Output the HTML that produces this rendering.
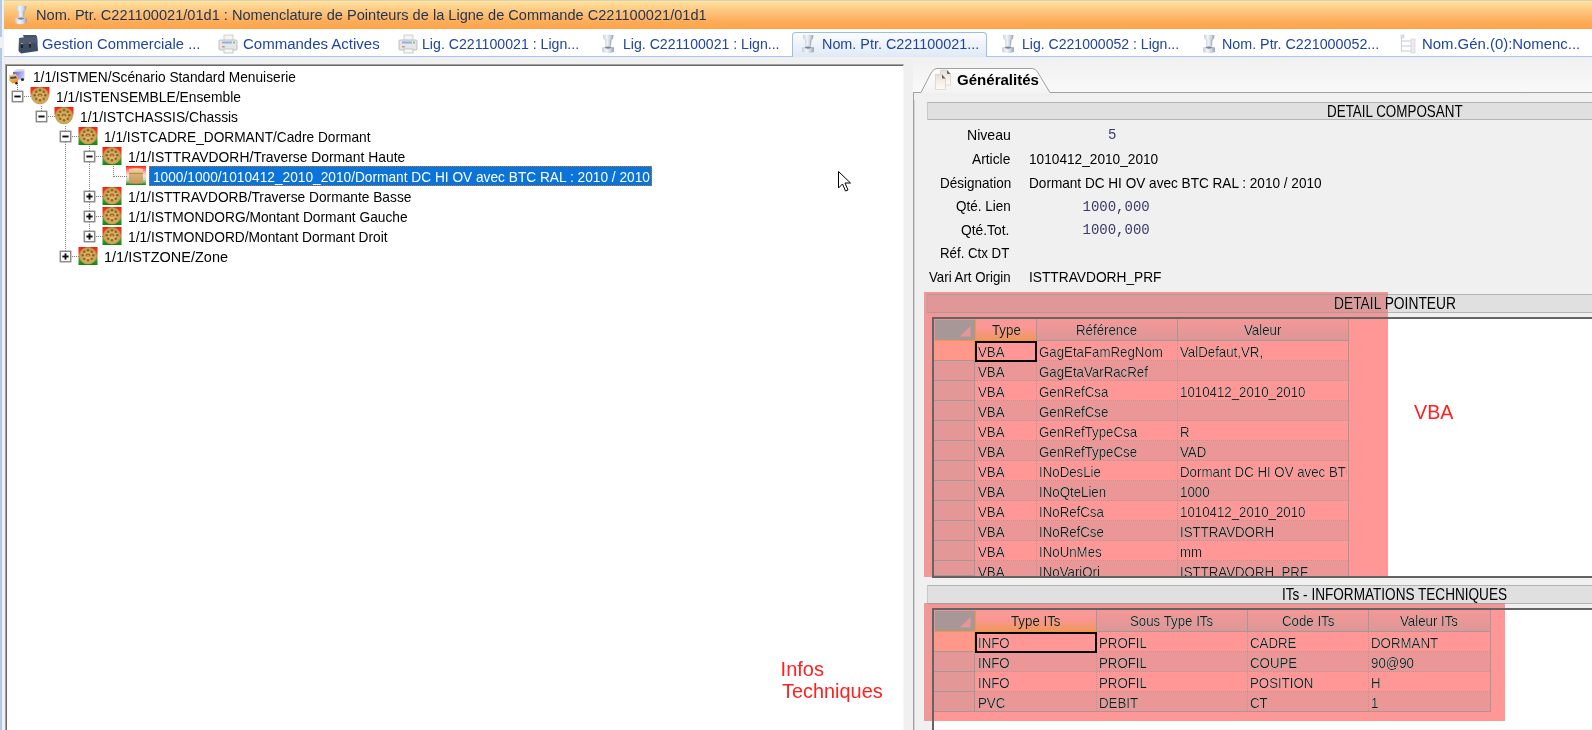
<!DOCTYPE html><html><head><meta charset="utf-8"><style>
html,body{margin:0;padding:0;}
body{width:1592px;height:730px;overflow:hidden;position:relative;background:#f0f0f0;font-family:"Liberation Sans", sans-serif;}
.t{position:absolute;white-space:nowrap;}
.b{position:absolute;box-sizing:border-box;}
svg{position:absolute;overflow:visible;}
</style></head><body>
<div class="b" style="left:0px;top:0px;width:4px;height:730px;background:#eef0f3;"></div>
<div class="b" style="left:0px;top:0px;width:2px;height:37px;background:#b7c9e2;"></div>
<div class="b" style="left:0px;top:48px;width:2px;height:682px;background:#b7c9e2;"></div>
<div class="b" style="left:4px;top:0px;width:1588px;height:1px;background:#d9d2b9;"></div>
<div class="b" style="left:4px;top:1px;width:1588px;height:28px;background:linear-gradient(#ffe49f 0%,#fdc47c 38%,#fdac58 75%,#ffa347 100%);"></div>
<div class="b" style="left:4px;top:29px;width:1588px;height:27px;background:#ffffff;"></div>
<div class="b" style="left:4px;top:56px;width:1588px;height:1px;background:#a9c6f0;"></div>
<div class="b" style="left:792px;top:32px;width:195px;height:25px;border:1px solid #9dbcea;border-bottom:none;border-radius:4px 4px 0 0;background:linear-gradient(#fbfcfe,#dfe9f6);"></div>
<div class="b" style="left:5px;top:64px;width:899px;height:666px;background:#fff;border-top:2px solid #a0a0a0;border-left:2px solid #a0a0a0;border-right:1px solid #f7f7f7;"></div>
<div class="b" style="left:7px;top:65px;width:896px;height:1px;background:#696969;"></div>
<div class="b" style="left:6px;top:65px;width:1px;height:665px;background:#696969;"></div>
<div class="b" style="left:913px;top:57px;width:679px;height:35px;background:linear-gradient(#f0f0f0,#f9f9f9);"></div>
<div class="b" style="left:913px;top:92px;width:679px;height:638px;background:#f0f0f0;border-left:1px solid #a0a0a0;border-top:1px solid #a8a8a8;"></div>
<div class="b" style="left:914px;top:93px;width:1px;height:637px;background:#d4d4d4;"></div>
<svg style="left:14px;top:5px" width="14" height="20" viewBox="0 0 14 20">
<defs><linearGradient id="bg14" x1="0" x2="1"><stop offset="0" stop-color="#c4ccd8"/><stop offset=".35" stop-color="#f2f5fa"/><stop offset=".7" stop-color="#cdd5e0"/><stop offset="1" stop-color="#8e9cb0"/></linearGradient></defs>
<path d="M2 1 Q7 -0.2 12.5 1.2 L12 4.5 Q11 6 10 6 L4 6 Q2.5 5 2.3 4.5 Z" fill="url(#bg14)"/>
<path d="M4 5.5 L10.5 5.5 L10 12 L4.5 12 Z" fill="url(#bg14)"/>
<path d="M1 13.5 Q7 11 13 13.5 L12.8 18 Q7 20.5 1.2 18 Z" fill="url(#bg14)"/>
<ellipse cx="7" cy="13.6" rx="3.2" ry="1.1" fill="#7a8698"/>
</svg>
<div class="t" style="left:36px;top:7.28px;font-size:15.5px;line-height:15.5px;color:#1d3557;transform:scaleX(0.9407);transform-origin:0 0;">Nom. Ptr. C221100021/01d1 : Nomenclature de Pointeurs de la Ligne de Commande C221100021/01d1</div>
<div class="t" style="left:42px;top:36.08px;font-size:15.5px;line-height:15.5px;color:#1f45a0;transform:scaleX(0.9532);transform-origin:0 0;">Gestion Commerciale ...</div>
<div class="t" style="left:242.6px;top:36.08px;font-size:15.5px;line-height:15.5px;color:#1f45a0;transform:scaleX(0.9675);transform-origin:0 0;">Commandes Actives</div>
<div class="t" style="left:422.2px;top:36.08px;font-size:15.5px;line-height:15.5px;color:#1f45a0;transform:scaleX(0.9131);transform-origin:0 0;">Lig. C221100021 : Lign...</div>
<div class="t" style="left:622.6px;top:36.08px;font-size:15.5px;line-height:15.5px;color:#1f45a0;transform:scaleX(0.9096);transform-origin:0 0;">Lig. C221100021 : Lign...</div>
<div class="t" style="left:822.2px;top:36.08px;font-size:15.5px;line-height:15.5px;color:#1f45a0;transform:scaleX(0.9273);transform-origin:0 0;">Nom. Ptr. C221100021...</div>
<div class="t" style="left:1022.2px;top:36.08px;font-size:15.5px;line-height:15.5px;color:#1f45a0;transform:scaleX(0.9070);transform-origin:0 0;">Lig. C221000052 : Lign...</div>
<div class="t" style="left:1222.2px;top:36.08px;font-size:15.5px;line-height:15.5px;color:#1f45a0;transform:scaleX(0.9217);transform-origin:0 0;">Nom. Ptr. C221000052...</div>
<div class="t" style="left:1422px;top:36.08px;font-size:15.5px;line-height:15.5px;color:#1f45a0;transform:scaleX(0.9619);transform-origin:0 0;">Nom.Gén.(0):Nomenc...</div>
<svg style="left:18px;top:34px" width="21" height="20" viewBox="0 0 21 20">
<path d="M5 1 L18 1 L19 3 L6 4 Z" fill="#4a525e"/>
<path d="M1 4 L19 2.5 L20 17 L3 19.5 L0.5 17 Z" fill="#3d4d63"/>
<path d="M1 4 L19 2.5 L19.5 9 L1 10 Z" fill="#4c5c74"/>
<rect x="3" y="9" width="2" height="5" fill="#1a2030"/><rect x="11" y="8.5" width="2" height="5" fill="#1a2030"/>
<rect x="3" y="9" width="2" height="1.2" fill="#c8a030"/><rect x="11" y="8.5" width="2" height="1.2" fill="#c8a030"/>
</svg>
<svg style="left:218px;top:34px" width="20" height="20" viewBox="0 0 20 20">
<rect x="6" y="1" width="9" height="6" fill="#f4f4f4" stroke="#c8c8c8" stroke-width=".8"/>
<rect x="1" y="6" width="18" height="10" rx="1" fill="#e6e6e6" stroke="#b4b4b4" stroke-width=".8"/>
<rect x="4" y="7.5" width="10" height="2" fill="#8fb0e0"/><rect x="15" y="7.5" width="2" height="2" fill="#80c880"/>
<rect x="4" y="12" width="2" height="1.5" fill="#e08888"/><rect x="6" y="12" width="1" height="1.5" fill="#88c888"/>
<rect x="6" y="15" width="9" height="4" fill="#f8f8f8" stroke="#bcbcbc" stroke-width=".8"/>
</svg>
<svg style="left:398px;top:34px" width="20" height="20" viewBox="0 0 20 20">
<rect x="6" y="1" width="9" height="6" fill="#f4f4f4" stroke="#c8c8c8" stroke-width=".8"/>
<rect x="1" y="6" width="18" height="10" rx="1" fill="#e6e6e6" stroke="#b4b4b4" stroke-width=".8"/>
<rect x="4" y="7.5" width="10" height="2" fill="#8fb0e0"/><rect x="15" y="7.5" width="2" height="2" fill="#80c880"/>
<rect x="4" y="12" width="2" height="1.5" fill="#e08888"/><rect x="6" y="12" width="1" height="1.5" fill="#88c888"/>
<rect x="6" y="15" width="9" height="4" fill="#f8f8f8" stroke="#bcbcbc" stroke-width=".8"/>
</svg>
<svg style="left:601px;top:34px" width="14" height="20" viewBox="0 0 14 20">
<defs><linearGradient id="bg601" x1="0" x2="1"><stop offset="0" stop-color="#c4ccd8"/><stop offset=".35" stop-color="#f2f5fa"/><stop offset=".7" stop-color="#cdd5e0"/><stop offset="1" stop-color="#8e9cb0"/></linearGradient></defs>
<path d="M2 1 Q7 -0.2 12.5 1.2 L12 4.5 Q11 6 10 6 L4 6 Q2.5 5 2.3 4.5 Z" fill="url(#bg601)"/>
<path d="M4 5.5 L10.5 5.5 L10 12 L4.5 12 Z" fill="url(#bg601)"/>
<path d="M1 13.5 Q7 11 13 13.5 L12.8 18 Q7 20.5 1.2 18 Z" fill="url(#bg601)"/>
<ellipse cx="7" cy="13.6" rx="3.2" ry="1.1" fill="#7a8698"/>
</svg>
<svg style="left:801px;top:34px" width="14" height="20" viewBox="0 0 14 20">
<defs><linearGradient id="bg801" x1="0" x2="1"><stop offset="0" stop-color="#c4ccd8"/><stop offset=".35" stop-color="#f2f5fa"/><stop offset=".7" stop-color="#cdd5e0"/><stop offset="1" stop-color="#8e9cb0"/></linearGradient></defs>
<path d="M2 1 Q7 -0.2 12.5 1.2 L12 4.5 Q11 6 10 6 L4 6 Q2.5 5 2.3 4.5 Z" fill="url(#bg801)"/>
<path d="M4 5.5 L10.5 5.5 L10 12 L4.5 12 Z" fill="url(#bg801)"/>
<path d="M1 13.5 Q7 11 13 13.5 L12.8 18 Q7 20.5 1.2 18 Z" fill="url(#bg801)"/>
<ellipse cx="7" cy="13.6" rx="3.2" ry="1.1" fill="#7a8698"/>
</svg>
<svg style="left:1001px;top:34px" width="14" height="20" viewBox="0 0 14 20">
<defs><linearGradient id="bg1001" x1="0" x2="1"><stop offset="0" stop-color="#c4ccd8"/><stop offset=".35" stop-color="#f2f5fa"/><stop offset=".7" stop-color="#cdd5e0"/><stop offset="1" stop-color="#8e9cb0"/></linearGradient></defs>
<path d="M2 1 Q7 -0.2 12.5 1.2 L12 4.5 Q11 6 10 6 L4 6 Q2.5 5 2.3 4.5 Z" fill="url(#bg1001)"/>
<path d="M4 5.5 L10.5 5.5 L10 12 L4.5 12 Z" fill="url(#bg1001)"/>
<path d="M1 13.5 Q7 11 13 13.5 L12.8 18 Q7 20.5 1.2 18 Z" fill="url(#bg1001)"/>
<ellipse cx="7" cy="13.6" rx="3.2" ry="1.1" fill="#7a8698"/>
</svg>
<svg style="left:1202px;top:34px" width="14" height="20" viewBox="0 0 14 20">
<defs><linearGradient id="bg1202" x1="0" x2="1"><stop offset="0" stop-color="#c4ccd8"/><stop offset=".35" stop-color="#f2f5fa"/><stop offset=".7" stop-color="#cdd5e0"/><stop offset="1" stop-color="#8e9cb0"/></linearGradient></defs>
<path d="M2 1 Q7 -0.2 12.5 1.2 L12 4.5 Q11 6 10 6 L4 6 Q2.5 5 2.3 4.5 Z" fill="url(#bg1202)"/>
<path d="M4 5.5 L10.5 5.5 L10 12 L4.5 12 Z" fill="url(#bg1202)"/>
<path d="M1 13.5 Q7 11 13 13.5 L12.8 18 Q7 20.5 1.2 18 Z" fill="url(#bg1202)"/>
<ellipse cx="7" cy="13.6" rx="3.2" ry="1.1" fill="#7a8698"/>
</svg>
<svg style="left:1398px;top:34px" width="18" height="20" viewBox="0 0 18 20">
<rect x="3" y="1" width="3" height="3" fill="#dde6f0" stroke="#c0c8d0" stroke-width=".6"/>
<rect x="3" y="4" width="1" height="14" fill="#c8d0dc"/>
<rect x="4" y="6" width="9" height="2" fill="#e2e4ea"/><rect x="4" y="11" width="9" height="2" fill="#e2e4ea"/><rect x="4" y="16" width="9" height="2" fill="#e2e4ea"/>
<rect x="13" y="5" width="4" height="14" fill="#eaecf2" stroke="#c8ccd4" stroke-width=".6"/>
</svg>
<svg style="left:0;top:0" width="1592" height="730"><g stroke="#808080" stroke-width="1" stroke-dasharray="1 1" shape-rendering="crispEdges"><line x1="17.5" y1="85" x2="17.5" y2="96.5"/><line x1="41.5" y1="106" x2="41.5" y2="116.5"/><line x1="65.5" y1="126" x2="65.5" y2="256.5"/><line x1="89.5" y1="146" x2="89.5" y2="236.5"/><line x1="113.5" y1="166" x2="113.5" y2="176.5"/><line x1="17.5" y1="96.5" x2="31" y2="96.5"/><line x1="41.5" y1="116.5" x2="55" y2="116.5"/><line x1="65.5" y1="136.5" x2="79" y2="136.5"/><line x1="89.5" y1="156.5" x2="103" y2="156.5"/><line x1="113.5" y1="176.5" x2="127" y2="176.5"/><line x1="89.5" y1="196.5" x2="103" y2="196.5"/><line x1="89.5" y1="216.5" x2="103" y2="216.5"/><line x1="89.5" y1="236.5" x2="103" y2="236.5"/><line x1="65.5" y1="256.5" x2="79" y2="256.5"/></g></svg>
<svg style="left:11px;top:90px" width="13" height="13" viewBox="0 0 13 13"><rect x="1.3" y="1.3" width="10.4" height="10.4" fill="#fff" stroke="#8a8a8a" stroke-width="1.5"/><g stroke="#111" stroke-width="1.9"><line x1="3.4" y1="6.5" x2="9.6" y2="6.5"/></g></svg>
<svg style="left:35px;top:110px" width="13" height="13" viewBox="0 0 13 13"><rect x="1.3" y="1.3" width="10.4" height="10.4" fill="#fff" stroke="#8a8a8a" stroke-width="1.5"/><g stroke="#111" stroke-width="1.9"><line x1="3.4" y1="6.5" x2="9.6" y2="6.5"/></g></svg>
<svg style="left:59px;top:130px" width="13" height="13" viewBox="0 0 13 13"><rect x="1.3" y="1.3" width="10.4" height="10.4" fill="#fff" stroke="#8a8a8a" stroke-width="1.5"/><g stroke="#111" stroke-width="1.9"><line x1="3.4" y1="6.5" x2="9.6" y2="6.5"/></g></svg>
<svg style="left:83px;top:150px" width="13" height="13" viewBox="0 0 13 13"><rect x="1.3" y="1.3" width="10.4" height="10.4" fill="#fff" stroke="#8a8a8a" stroke-width="1.5"/><g stroke="#111" stroke-width="1.9"><line x1="3.4" y1="6.5" x2="9.6" y2="6.5"/></g></svg>
<svg style="left:83px;top:190px" width="13" height="13" viewBox="0 0 13 13"><rect x="1.3" y="1.3" width="10.4" height="10.4" fill="#fff" stroke="#8a8a8a" stroke-width="1.5"/><g stroke="#111" stroke-width="1.9"><line x1="3.4" y1="6.5" x2="9.6" y2="6.5"/><line x1="6.5" y1="3.4" x2="6.5" y2="9.6"/></g></svg>
<svg style="left:83px;top:210px" width="13" height="13" viewBox="0 0 13 13"><rect x="1.3" y="1.3" width="10.4" height="10.4" fill="#fff" stroke="#8a8a8a" stroke-width="1.5"/><g stroke="#111" stroke-width="1.9"><line x1="3.4" y1="6.5" x2="9.6" y2="6.5"/><line x1="6.5" y1="3.4" x2="6.5" y2="9.6"/></g></svg>
<svg style="left:83px;top:230px" width="13" height="13" viewBox="0 0 13 13"><rect x="1.3" y="1.3" width="10.4" height="10.4" fill="#fff" stroke="#8a8a8a" stroke-width="1.5"/><g stroke="#111" stroke-width="1.9"><line x1="3.4" y1="6.5" x2="9.6" y2="6.5"/><line x1="6.5" y1="3.4" x2="6.5" y2="9.6"/></g></svg>
<svg style="left:59px;top:250px" width="13" height="13" viewBox="0 0 13 13"><rect x="1.3" y="1.3" width="10.4" height="10.4" fill="#fff" stroke="#8a8a8a" stroke-width="1.5"/><g stroke="#111" stroke-width="1.9"><line x1="3.4" y1="6.5" x2="9.6" y2="6.5"/><line x1="6.5" y1="3.4" x2="6.5" y2="9.6"/></g></svg>
<svg style="left:30px;top:86px" width="20" height="19" viewBox="0 0 20 19">
<defs><linearGradient id="dg1" x1="0" y1="0" x2="0" y2="1"><stop offset="0" stop-color="#ff1a10"/><stop offset=".35" stop-color="#ff3a28"/><stop offset=".65" stop-color="#ffffff" stop-opacity="0"/><stop offset="1" stop-color="#ffffff" stop-opacity="0"/></linearGradient>
<radialGradient id="dr1" cx=".5" cy=".55" r=".6"><stop offset="0" stop-color="#e2c070"/><stop offset=".75" stop-color="#c8a050"/><stop offset="1" stop-color="#a88038"/></radialGradient></defs>
<rect x="0.5" y="1" width="19" height="18" fill="url(#dg1)"/>
<ellipse cx="10" cy="9.7" rx="8.9" ry="8.6" fill="url(#dr1)"/>
<g fill="#8a5a20" opacity=".9"><circle cx="10.00" cy="4.30" r="1.25"/><circle cx="13.75" cy="5.76" r="1.25"/><circle cx="15.30" cy="9.30" r="1.25"/><circle cx="13.75" cy="12.84" r="1.25"/><circle cx="10.00" cy="14.30" r="1.25"/><circle cx="6.25" cy="12.84" r="1.25"/><circle cx="4.70" cy="9.30" r="1.25"/><circle cx="6.25" cy="5.76" r="1.25"/></g>
<ellipse cx="10" cy="9.3" rx="2.4" ry="1.8" fill="#9a6a30"/>
<ellipse cx="10" cy="10" rx="1.3" ry="1" fill="#e89078"/>
</svg>
<svg style="left:54px;top:106px" width="20" height="19" viewBox="0 0 20 19">
<defs><linearGradient id="dg2" x1="0" y1="0" x2="0" y2="1"><stop offset="0" stop-color="#ff1a10"/><stop offset=".35" stop-color="#ff3a28"/><stop offset=".65" stop-color="#ffffff" stop-opacity="0"/><stop offset="1" stop-color="#ffffff" stop-opacity="0"/></linearGradient>
<radialGradient id="dr2" cx=".5" cy=".55" r=".6"><stop offset="0" stop-color="#e2c070"/><stop offset=".75" stop-color="#c8a050"/><stop offset="1" stop-color="#a88038"/></radialGradient></defs>
<rect x="0.5" y="1" width="19" height="18" fill="url(#dg2)"/>
<ellipse cx="10" cy="9.7" rx="8.9" ry="8.6" fill="url(#dr2)"/>
<g fill="#8a5a20" opacity=".9"><circle cx="10.00" cy="4.30" r="1.25"/><circle cx="13.75" cy="5.76" r="1.25"/><circle cx="15.30" cy="9.30" r="1.25"/><circle cx="13.75" cy="12.84" r="1.25"/><circle cx="10.00" cy="14.30" r="1.25"/><circle cx="6.25" cy="12.84" r="1.25"/><circle cx="4.70" cy="9.30" r="1.25"/><circle cx="6.25" cy="5.76" r="1.25"/></g>
<ellipse cx="10" cy="9.3" rx="2.4" ry="1.8" fill="#9a6a30"/>
<ellipse cx="10" cy="10" rx="1.3" ry="1" fill="#e89078"/>
</svg>
<svg style="left:78px;top:126px" width="20" height="19" viewBox="0 0 20 19">
<defs><linearGradient id="dg3" x1="0" y1="0" x2="0" y2="1"><stop offset="0" stop-color="#ff1a10"/><stop offset=".3" stop-color="#f23a22"/><stop offset=".5" stop-color="#b87a50"/><stop offset=".72" stop-color="#3c9a3c"/><stop offset="1" stop-color="#0e860e"/></linearGradient>
<radialGradient id="dr3" cx=".5" cy=".55" r=".6"><stop offset="0" stop-color="#e2c070"/><stop offset=".75" stop-color="#c8a050"/><stop offset="1" stop-color="#a88038"/></radialGradient></defs>
<rect x="0.5" y="1" width="19" height="18" fill="url(#dg3)"/>
<ellipse cx="10" cy="9.7" rx="8.9" ry="8.6" fill="url(#dr3)"/>
<g fill="#8a5a20" opacity=".9"><circle cx="10.00" cy="4.30" r="1.25"/><circle cx="13.75" cy="5.76" r="1.25"/><circle cx="15.30" cy="9.30" r="1.25"/><circle cx="13.75" cy="12.84" r="1.25"/><circle cx="10.00" cy="14.30" r="1.25"/><circle cx="6.25" cy="12.84" r="1.25"/><circle cx="4.70" cy="9.30" r="1.25"/><circle cx="6.25" cy="5.76" r="1.25"/></g>
<ellipse cx="10" cy="9.3" rx="2.4" ry="1.8" fill="#9a6a30"/>
<ellipse cx="10" cy="10" rx="1.3" ry="1" fill="#e89078"/>
</svg>
<svg style="left:102px;top:146px" width="20" height="19" viewBox="0 0 20 19">
<defs><linearGradient id="dg4" x1="0" y1="0" x2="0" y2="1"><stop offset="0" stop-color="#ff1a10"/><stop offset=".3" stop-color="#f23a22"/><stop offset=".5" stop-color="#b87a50"/><stop offset=".72" stop-color="#3c9a3c"/><stop offset="1" stop-color="#0e860e"/></linearGradient>
<radialGradient id="dr4" cx=".5" cy=".55" r=".6"><stop offset="0" stop-color="#e2c070"/><stop offset=".75" stop-color="#c8a050"/><stop offset="1" stop-color="#a88038"/></radialGradient></defs>
<rect x="0.5" y="1" width="19" height="18" fill="url(#dg4)"/>
<ellipse cx="10" cy="9.7" rx="8.9" ry="8.6" fill="url(#dr4)"/>
<g fill="#8a5a20" opacity=".9"><circle cx="10.00" cy="4.30" r="1.25"/><circle cx="13.75" cy="5.76" r="1.25"/><circle cx="15.30" cy="9.30" r="1.25"/><circle cx="13.75" cy="12.84" r="1.25"/><circle cx="10.00" cy="14.30" r="1.25"/><circle cx="6.25" cy="12.84" r="1.25"/><circle cx="4.70" cy="9.30" r="1.25"/><circle cx="6.25" cy="5.76" r="1.25"/></g>
<ellipse cx="10" cy="9.3" rx="2.4" ry="1.8" fill="#9a6a30"/>
<ellipse cx="10" cy="10" rx="1.3" ry="1" fill="#e89078"/>
</svg>
<svg style="left:126px;top:166px" width="20" height="19" viewBox="0 0 20 19">
<defs><linearGradient id="bx" x1="0" y1="0" x2="0" y2="1"><stop offset="0" stop-color="#ff1a10"/><stop offset=".5" stop-color="#ff9080" stop-opacity=".3"/><stop offset=".75" stop-color="#40a040" stop-opacity=".4"/><stop offset="1" stop-color="#108010"/></linearGradient>
<linearGradient id="bxf" x1="0" y1="0" x2="0" y2="1"><stop offset="0" stop-color="#f0dcb0"/><stop offset=".4" stop-color="#d8b078"/><stop offset="1" stop-color="#c89858"/></linearGradient></defs>
<rect width="20" height="19" fill="url(#bx)"/>
<path d="M3 3 Q10 1.5 17 3 L17 17 Q10 18.5 3 17 Z" fill="url(#bxf)"/>
<rect x="3" y="7" width="14" height="1" fill="#b88848"/>
</svg>
<svg style="left:102px;top:186px" width="20" height="19" viewBox="0 0 20 19">
<defs><linearGradient id="dg6" x1="0" y1="0" x2="0" y2="1"><stop offset="0" stop-color="#ff1a10"/><stop offset=".3" stop-color="#f23a22"/><stop offset=".5" stop-color="#b87a50"/><stop offset=".72" stop-color="#3c9a3c"/><stop offset="1" stop-color="#0e860e"/></linearGradient>
<radialGradient id="dr6" cx=".5" cy=".55" r=".6"><stop offset="0" stop-color="#e2c070"/><stop offset=".75" stop-color="#c8a050"/><stop offset="1" stop-color="#a88038"/></radialGradient></defs>
<rect x="0.5" y="1" width="19" height="18" fill="url(#dg6)"/>
<ellipse cx="10" cy="9.7" rx="8.9" ry="8.6" fill="url(#dr6)"/>
<g fill="#8a5a20" opacity=".9"><circle cx="10.00" cy="4.30" r="1.25"/><circle cx="13.75" cy="5.76" r="1.25"/><circle cx="15.30" cy="9.30" r="1.25"/><circle cx="13.75" cy="12.84" r="1.25"/><circle cx="10.00" cy="14.30" r="1.25"/><circle cx="6.25" cy="12.84" r="1.25"/><circle cx="4.70" cy="9.30" r="1.25"/><circle cx="6.25" cy="5.76" r="1.25"/></g>
<ellipse cx="10" cy="9.3" rx="2.4" ry="1.8" fill="#9a6a30"/>
<ellipse cx="10" cy="10" rx="1.3" ry="1" fill="#e89078"/>
</svg>
<svg style="left:102px;top:206px" width="20" height="19" viewBox="0 0 20 19">
<defs><linearGradient id="dg7" x1="0" y1="0" x2="0" y2="1"><stop offset="0" stop-color="#ff1a10"/><stop offset=".3" stop-color="#f23a22"/><stop offset=".5" stop-color="#b87a50"/><stop offset=".72" stop-color="#3c9a3c"/><stop offset="1" stop-color="#0e860e"/></linearGradient>
<radialGradient id="dr7" cx=".5" cy=".55" r=".6"><stop offset="0" stop-color="#e2c070"/><stop offset=".75" stop-color="#c8a050"/><stop offset="1" stop-color="#a88038"/></radialGradient></defs>
<rect x="0.5" y="1" width="19" height="18" fill="url(#dg7)"/>
<ellipse cx="10" cy="9.7" rx="8.9" ry="8.6" fill="url(#dr7)"/>
<g fill="#8a5a20" opacity=".9"><circle cx="10.00" cy="4.30" r="1.25"/><circle cx="13.75" cy="5.76" r="1.25"/><circle cx="15.30" cy="9.30" r="1.25"/><circle cx="13.75" cy="12.84" r="1.25"/><circle cx="10.00" cy="14.30" r="1.25"/><circle cx="6.25" cy="12.84" r="1.25"/><circle cx="4.70" cy="9.30" r="1.25"/><circle cx="6.25" cy="5.76" r="1.25"/></g>
<ellipse cx="10" cy="9.3" rx="2.4" ry="1.8" fill="#9a6a30"/>
<ellipse cx="10" cy="10" rx="1.3" ry="1" fill="#e89078"/>
</svg>
<svg style="left:102px;top:226px" width="20" height="19" viewBox="0 0 20 19">
<defs><linearGradient id="dg8" x1="0" y1="0" x2="0" y2="1"><stop offset="0" stop-color="#ff1a10"/><stop offset=".3" stop-color="#f23a22"/><stop offset=".5" stop-color="#b87a50"/><stop offset=".72" stop-color="#3c9a3c"/><stop offset="1" stop-color="#0e860e"/></linearGradient>
<radialGradient id="dr8" cx=".5" cy=".55" r=".6"><stop offset="0" stop-color="#e2c070"/><stop offset=".75" stop-color="#c8a050"/><stop offset="1" stop-color="#a88038"/></radialGradient></defs>
<rect x="0.5" y="1" width="19" height="18" fill="url(#dg8)"/>
<ellipse cx="10" cy="9.7" rx="8.9" ry="8.6" fill="url(#dr8)"/>
<g fill="#8a5a20" opacity=".9"><circle cx="10.00" cy="4.30" r="1.25"/><circle cx="13.75" cy="5.76" r="1.25"/><circle cx="15.30" cy="9.30" r="1.25"/><circle cx="13.75" cy="12.84" r="1.25"/><circle cx="10.00" cy="14.30" r="1.25"/><circle cx="6.25" cy="12.84" r="1.25"/><circle cx="4.70" cy="9.30" r="1.25"/><circle cx="6.25" cy="5.76" r="1.25"/></g>
<ellipse cx="10" cy="9.3" rx="2.4" ry="1.8" fill="#9a6a30"/>
<ellipse cx="10" cy="10" rx="1.3" ry="1" fill="#e89078"/>
</svg>
<svg style="left:78px;top:246px" width="20" height="19" viewBox="0 0 20 19">
<defs><linearGradient id="dg9" x1="0" y1="0" x2="0" y2="1"><stop offset="0" stop-color="#ff1a10"/><stop offset=".3" stop-color="#f23a22"/><stop offset=".5" stop-color="#b87a50"/><stop offset=".72" stop-color="#3c9a3c"/><stop offset="1" stop-color="#0e860e"/></linearGradient>
<radialGradient id="dr9" cx=".5" cy=".55" r=".6"><stop offset="0" stop-color="#e2c070"/><stop offset=".75" stop-color="#c8a050"/><stop offset="1" stop-color="#a88038"/></radialGradient></defs>
<rect x="0.5" y="1" width="19" height="18" fill="url(#dg9)"/>
<ellipse cx="10" cy="9.7" rx="8.9" ry="8.6" fill="url(#dr9)"/>
<g fill="#8a5a20" opacity=".9"><circle cx="10.00" cy="4.30" r="1.25"/><circle cx="13.75" cy="5.76" r="1.25"/><circle cx="15.30" cy="9.30" r="1.25"/><circle cx="13.75" cy="12.84" r="1.25"/><circle cx="10.00" cy="14.30" r="1.25"/><circle cx="6.25" cy="12.84" r="1.25"/><circle cx="4.70" cy="9.30" r="1.25"/><circle cx="6.25" cy="5.76" r="1.25"/></g>
<ellipse cx="10" cy="9.3" rx="2.4" ry="1.8" fill="#9a6a30"/>
<ellipse cx="10" cy="10" rx="1.3" ry="1" fill="#e89078"/>
</svg>
<svg style="left:6px;top:66px" width="22" height="22" viewBox="0 0 22 22">
<defs><linearGradient id="trk" x1="0" y1="0" x2="1" y2="0.3"><stop offset="0" stop-color="#5a5ad0"/><stop offset="1" stop-color="#c8c8ff"/></linearGradient>
<linearGradient id="cab" x1="0" y1="0" x2="0.4" y2="1"><stop offset="0" stop-color="#fae27a"/><stop offset=".6" stop-color="#f0b838"/><stop offset="1" stop-color="#f08a20"/></linearGradient></defs>
<path d="M7 6 L11 3 L18.5 3 L18.5 5 Z" fill="#dcdce4"/>
<path d="M7 6 L18.5 5 L18.5 12.5 L9 14.5 L7 13 Z" fill="url(#trk)"/>
<circle cx="16.5" cy="13.5" r="1.6" fill="#2a2a2a"/>
<path d="M3 9 L9.5 8 L12 10.5 L12 16 L6.5 17.5 L3.3 14.5 Z" fill="url(#cab)"/>
<path d="M4 11 L10 10.3 L10.8 12.2 L4.6 13 Z" fill="#34449a"/>
<circle cx="10.5" cy="17.2" r="1.3" fill="#202020"/>
</svg>
<div class="b" style="left:149px;top:166px;width:503px;height:20px;background:#0a74da;outline:1px dotted #d07020;outline-offset:-1px;"></div>
<div class="t" style="left:32.9px;top:68.90px;font-size:15px;line-height:15px;color:#000;transform:scaleX(0.9139);transform-origin:0 0;">1/1/ISTMEN/Scénario Standard Menuiserie</div>
<div class="t" style="left:56.3px;top:88.90px;font-size:15px;line-height:15px;color:#000;transform:scaleX(0.9203);transform-origin:0 0;">1/1/ISTENSEMBLE/Ensemble</div>
<div class="t" style="left:80.1px;top:108.90px;font-size:15px;line-height:15px;color:#000;transform:scaleX(0.9202);transform-origin:0 0;">1/1/ISTCHASSIS/Chassis</div>
<div class="t" style="left:104.1px;top:128.90px;font-size:15px;line-height:15px;color:#000;transform:scaleX(0.9135);transform-origin:0 0;">1/1/ISTCADRE_DORMANT/Cadre Dormant</div>
<div class="t" style="left:128.10000000000002px;top:148.90px;font-size:15px;line-height:15px;color:#000;transform:scaleX(0.9237);transform-origin:0 0;">1/1/ISTTRAVDORH/Traverse Dormant Haute</div>
<div class="t" style="left:153.20000000000002px;top:168.90px;font-size:15px;line-height:15px;color:#fff;transform:scaleX(0.9135);transform-origin:0 0;">1000/1000/1010412_2010_2010/Dormant DC HI OV avec BTC RAL : 2010 / 2010</div>
<div class="t" style="left:128.10000000000002px;top:188.90px;font-size:15px;line-height:15px;color:#000;transform:scaleX(0.9164);transform-origin:0 0;">1/1/ISTTRAVDORB/Traverse Dormante Basse</div>
<div class="t" style="left:128.10000000000002px;top:208.90px;font-size:15px;line-height:15px;color:#000;transform:scaleX(0.9165);transform-origin:0 0;">1/1/ISTMONDORG/Montant Dormant Gauche</div>
<div class="t" style="left:128.10000000000002px;top:228.90px;font-size:15px;line-height:15px;color:#000;transform:scaleX(0.9158);transform-origin:0 0;">1/1/ISTMONDORD/Montant Dormant Droit</div>
<div class="t" style="left:104.1px;top:248.90px;font-size:15px;line-height:15px;color:#000;transform:scaleX(0.9659);transform-origin:0 0;">1/1/ISTZONE/Zone</div>
<svg style="left:838px;top:171px" width="14" height="22" viewBox="0 0 14 22">
<path d="M0.5 0.5 L0.5 17 L4.5 13 L7.5 20 L10 19 L7 12 L12.5 12 Z" fill="#fff" stroke="#000" stroke-width="1" stroke-linejoin="miter"/>
</svg>
<svg style="left:900px;top:60px" width="700" height="40" viewBox="900 60 700 40">
<defs><linearGradient id="tabg" x1="0" y1="0" x2="0" y2="1"><stop offset="0" stop-color="#fdfdfd"/><stop offset="1" stop-color="#f0f0f0"/></linearGradient></defs>
<path d="M913.5 100 L913.5 92.5 L921 92.5 L931 73 Q933.5 68.5 937 68.5 L1032 68.5 Q1035.5 68.5 1037.5 72 L1050 92.5 L1600 92.5" fill="url(#tabg)" stroke="#a0a0a0" stroke-width="1"/>
<rect x="915" y="93" width="700" height="9" fill="#f0f0f0"/>
</svg>
<svg style="left:934px;top:69px" width="18" height="21" viewBox="0 0 18 21">
<defs><linearGradient id="dcg" x1="0" y1="0" x2="0" y2="1"><stop offset="0" stop-color="#e8e0d8"/><stop offset="1" stop-color="#fffcf4"/></linearGradient></defs>
<path d="M6.5 1 L13 1 L16.5 5 L16.5 16 L6.5 16 Z" fill="url(#dcg)" stroke="#d0c8c0" stroke-width=".6"/>
<path d="M13 1 L13 5 L16.5 5 Z" fill="#6a6460"/>
<path d="M1.5 5.5 L8 5.5 L11.5 9.5 L11.5 20.5 L1.5 20.5 Z" fill="url(#dcg)" stroke="#d0c8c0" stroke-width=".6"/>
<path d="M8 5.5 L8 9.5 L11.5 9.5 Z" fill="#6a6460"/>
</svg>
<div class="t" style="left:956.5px;top:72.10px;font-size:15px;line-height:15px;color:#000;font-weight:bold;transform:scaleX(1.0032);transform-origin:0 0;">Généralités</div>
<div class="b" style="left:927px;top:102px;width:1000px;height:18px;background:#e0e0e0;border-top:1px solid #b4b4b4;border-bottom:1px solid #b4b4b4;border-left:1px solid #c8c8c8;"></div>
<div class="t" style="left:1326.8px;top:103.33px;font-size:16.5px;line-height:16.5px;color:#000;transform:scaleX(0.8128);transform-origin:0 0;">DETAIL COMPOSANT</div>
<div class="t" style="left:966.9000000000001px;top:128.33px;font-size:14.5px;line-height:14.5px;color:#000;transform:scaleX(0.9706);transform-origin:0 0;">Niveau</div>
<div class="t" style="left:972.4000000000001px;top:151.93px;font-size:14.5px;line-height:14.5px;color:#000;transform:scaleX(0.9508);transform-origin:0 0;">Article</div>
<div class="t" style="left:939.5px;top:175.53px;font-size:14.5px;line-height:14.5px;color:#000;transform:scaleX(0.9300);transform-origin:0 0;">Désignation</div>
<div class="t" style="left:955.9000000000001px;top:199.13px;font-size:14.5px;line-height:14.5px;color:#000;transform:scaleX(0.9296);transform-origin:0 0;">Qté. Lien</div>
<div class="t" style="left:960.9000000000001px;top:222.73px;font-size:14.5px;line-height:14.5px;color:#000;transform:scaleX(0.9531);transform-origin:0 0;">Qté.Tot.</div>
<div class="t" style="left:939.8000000000001px;top:246.33px;font-size:14.5px;line-height:14.5px;color:#000;transform:scaleX(0.9150);transform-origin:0 0;">Réf. Ctx DT</div>
<div class="t" style="left:929.0px;top:269.93px;font-size:14.5px;line-height:14.5px;color:#000;transform:scaleX(0.9151);transform-origin:0 0;">Vari Art Origin</div>
<div class="t" style="left:1029.2px;top:151.93px;font-size:14.5px;line-height:14.5px;color:#000;transform:scaleX(0.9426);transform-origin:0 0;">1010412_2010_2010</div>
<div class="t" style="left:1029.2px;top:175.53px;font-size:14.5px;line-height:14.5px;color:#000;transform:scaleX(0.9374);transform-origin:0 0;">Dormant DC HI OV avec BTC RAL : 2010 / 2010</div>
<div class="t" style="left:1029.2px;top:269.93px;font-size:14.5px;line-height:14.5px;color:#000;transform:scaleX(0.9471);transform-origin:0 0;">ISTTRAVDORH_PRF</div>
<div class="t" style="left:1108px;top:127.65px;font-size:14px;line-height:14px;color:#3a3a66;font-family:'Liberation Mono', monospace;">5</div>
<div class="t" style="left:1082.5px;top:199.65px;font-size:14px;line-height:14px;color:#3a3a66;font-family:'Liberation Mono', monospace;">1000,000</div>
<div class="t" style="left:1082.5px;top:223.45px;font-size:14px;line-height:14px;color:#3a3a66;font-family:'Liberation Mono', monospace;">1000,000</div>
<div class="b" style="left:927px;top:294px;width:1000px;height:19px;background:#e0e0e0;border-top:1px solid #b4b4b4;border-bottom:1px solid #b4b4b4;border-left:1px solid #c8c8c8;"></div>
<div class="t" style="left:1334.1000000000001px;top:295.33px;font-size:16.5px;line-height:16.5px;color:#000;transform:scaleX(0.8370);transform-origin:0 0;">DETAIL POINTEUR</div>
<div class="b" style="left:927px;top:585px;width:1000px;height:19px;background:#e0e0e0;border-top:1px solid #b4b4b4;border-bottom:1px solid #b4b4b4;border-left:1px solid #c8c8c8;"></div>
<div class="t" style="left:1282.3px;top:586.33px;font-size:16.5px;line-height:16.5px;color:#000;transform:scaleX(0.8228);transform-origin:0 0;">ITs - INFORMATIONS TECHNIQUES</div>
<div class="b" style="left:932px;top:317px;width:668px;height:259px;background:#fff;"></div>
<div class="b" style="left:934px;top:319px;width:42px;height:22px;background:#a8a8a8;border-top:1px solid #e4e4e4;border-left:1px solid #e4e4e4;border-right:1px solid #f0a040;border-bottom:1px solid #f0a040;"></div>
<svg style="left:959.5px;top:325.5px" width="11" height="11" viewBox="0 0 11 11"><path d="M10.5 0 L10.5 10.5 L0 10.5 Z" fill="#e4e4e4"/></svg>
<div class="b" style="left:976px;top:319px;width:61px;height:22px;background:linear-gradient(#fcdcc0,#f8b888 55%,#f09a5c);border-right:1px solid #a8a8a8;border-bottom:1px solid #f0a040;"></div>
<div class="t" style="left:991.61734375px;top:322.93px;font-size:14.5px;line-height:14.5px;color:#1c1c1c;transform:scaleX(0.9150);transform-origin:0 0;">Type</div>
<div class="b" style="left:1037px;top:319px;width:141px;height:22px;background:linear-gradient(#f6f6f6,#dcdcdc);border-right:1px solid #a8a8a8;border-bottom:1px solid #a8a8a8;"></div>
<div class="t" style="left:1076.3975390625px;top:322.93px;font-size:14.5px;line-height:14.5px;color:#1c1c1c;transform:scaleX(0.9150);transform-origin:0 0;">Référence</div>
<div class="b" style="left:1178px;top:319px;width:171px;height:22px;background:linear-gradient(#f6f6f6,#dcdcdc);border-right:1px solid #a8a8a8;border-bottom:1px solid #a8a8a8;"></div>
<div class="t" style="left:1244.3211328125px;top:322.93px;font-size:14.5px;line-height:14.5px;color:#1c1c1c;transform:scaleX(0.9150);transform-origin:0 0;">Valeur</div>
<div class="b" style="left:934px;top:341px;width:41px;height:20px;background:#ffcc8a;border-right:1px solid #f0a040;border-bottom:1px solid #a8a8a8;"></div>
<div class="b" style="left:975px;top:341px;width:373px;height:20px;background:#ffffff;"></div>
<div class="b" style="left:975px;top:341px;width:60px;height:20px;overflow:hidden;"><div class="t" style="left:3.2px;top:3.93px;font-size:14.5px;line-height:14.5px;color:#1c1c1c;transform:scaleX(0.915);transform-origin:0 0;">VBA</div></div>
<div class="b" style="left:1036px;top:341px;width:140px;height:20px;overflow:hidden;"><div class="t" style="left:3.2px;top:3.93px;font-size:14.5px;line-height:14.5px;color:#1c1c1c;transform:scaleX(0.915);transform-origin:0 0;">GagEtaFamRegNom</div></div>
<div class="b" style="left:1177px;top:341px;width:170px;height:20px;overflow:hidden;"><div class="t" style="left:3.2px;top:3.93px;font-size:14.5px;line-height:14.5px;color:#1c1c1c;transform:scaleX(0.915);transform-origin:0 0;">ValDefaut,VR,</div></div>
<div class="b" style="left:934px;top:361px;width:41px;height:20px;background:#e3e3e3;border-right:1px solid #a8a8a8;border-bottom:1px solid #a8a8a8;"></div>
<div class="b" style="left:975px;top:361px;width:373px;height:20px;background:#ebebeb;"></div>
<div class="b" style="left:975px;top:361px;width:60px;height:20px;overflow:hidden;"><div class="t" style="left:3.2px;top:3.93px;font-size:14.5px;line-height:14.5px;color:#1c1c1c;transform:scaleX(0.915);transform-origin:0 0;">VBA</div></div>
<div class="b" style="left:1036px;top:361px;width:140px;height:20px;overflow:hidden;"><div class="t" style="left:3.2px;top:3.93px;font-size:14.5px;line-height:14.5px;color:#1c1c1c;transform:scaleX(0.915);transform-origin:0 0;">GagEtaVarRacRef</div></div>
<div class="b" style="left:934px;top:381px;width:41px;height:20px;background:#e3e3e3;border-right:1px solid #a8a8a8;border-bottom:1px solid #a8a8a8;"></div>
<div class="b" style="left:975px;top:381px;width:373px;height:20px;background:#ffffff;"></div>
<div class="b" style="left:975px;top:381px;width:60px;height:20px;overflow:hidden;"><div class="t" style="left:3.2px;top:3.93px;font-size:14.5px;line-height:14.5px;color:#1c1c1c;transform:scaleX(0.915);transform-origin:0 0;">VBA</div></div>
<div class="b" style="left:1036px;top:381px;width:140px;height:20px;overflow:hidden;"><div class="t" style="left:3.2px;top:3.93px;font-size:14.5px;line-height:14.5px;color:#1c1c1c;transform:scaleX(0.915);transform-origin:0 0;">GenRefCsa</div></div>
<div class="b" style="left:1177px;top:381px;width:170px;height:20px;overflow:hidden;"><div class="t" style="left:3.2px;top:3.93px;font-size:14.5px;line-height:14.5px;color:#1c1c1c;transform:scaleX(0.915);transform-origin:0 0;">1010412_2010_2010</div></div>
<div class="b" style="left:934px;top:401px;width:41px;height:20px;background:#e3e3e3;border-right:1px solid #a8a8a8;border-bottom:1px solid #a8a8a8;"></div>
<div class="b" style="left:975px;top:401px;width:373px;height:20px;background:#ebebeb;"></div>
<div class="b" style="left:975px;top:401px;width:60px;height:20px;overflow:hidden;"><div class="t" style="left:3.2px;top:3.93px;font-size:14.5px;line-height:14.5px;color:#1c1c1c;transform:scaleX(0.915);transform-origin:0 0;">VBA</div></div>
<div class="b" style="left:1036px;top:401px;width:140px;height:20px;overflow:hidden;"><div class="t" style="left:3.2px;top:3.93px;font-size:14.5px;line-height:14.5px;color:#1c1c1c;transform:scaleX(0.915);transform-origin:0 0;">GenRefCse</div></div>
<div class="b" style="left:934px;top:421px;width:41px;height:20px;background:#e3e3e3;border-right:1px solid #a8a8a8;border-bottom:1px solid #a8a8a8;"></div>
<div class="b" style="left:975px;top:421px;width:373px;height:20px;background:#ffffff;"></div>
<div class="b" style="left:975px;top:421px;width:60px;height:20px;overflow:hidden;"><div class="t" style="left:3.2px;top:3.93px;font-size:14.5px;line-height:14.5px;color:#1c1c1c;transform:scaleX(0.915);transform-origin:0 0;">VBA</div></div>
<div class="b" style="left:1036px;top:421px;width:140px;height:20px;overflow:hidden;"><div class="t" style="left:3.2px;top:3.93px;font-size:14.5px;line-height:14.5px;color:#1c1c1c;transform:scaleX(0.915);transform-origin:0 0;">GenRefTypeCsa</div></div>
<div class="b" style="left:1177px;top:421px;width:170px;height:20px;overflow:hidden;"><div class="t" style="left:3.2px;top:3.93px;font-size:14.5px;line-height:14.5px;color:#1c1c1c;transform:scaleX(0.915);transform-origin:0 0;">R</div></div>
<div class="b" style="left:934px;top:441px;width:41px;height:20px;background:#e3e3e3;border-right:1px solid #a8a8a8;border-bottom:1px solid #a8a8a8;"></div>
<div class="b" style="left:975px;top:441px;width:373px;height:20px;background:#ebebeb;"></div>
<div class="b" style="left:975px;top:441px;width:60px;height:20px;overflow:hidden;"><div class="t" style="left:3.2px;top:3.93px;font-size:14.5px;line-height:14.5px;color:#1c1c1c;transform:scaleX(0.915);transform-origin:0 0;">VBA</div></div>
<div class="b" style="left:1036px;top:441px;width:140px;height:20px;overflow:hidden;"><div class="t" style="left:3.2px;top:3.93px;font-size:14.5px;line-height:14.5px;color:#1c1c1c;transform:scaleX(0.915);transform-origin:0 0;">GenRefTypeCse</div></div>
<div class="b" style="left:1177px;top:441px;width:170px;height:20px;overflow:hidden;"><div class="t" style="left:3.2px;top:3.93px;font-size:14.5px;line-height:14.5px;color:#1c1c1c;transform:scaleX(0.915);transform-origin:0 0;">VAD</div></div>
<div class="b" style="left:934px;top:461px;width:41px;height:20px;background:#e3e3e3;border-right:1px solid #a8a8a8;border-bottom:1px solid #a8a8a8;"></div>
<div class="b" style="left:975px;top:461px;width:373px;height:20px;background:#ffffff;"></div>
<div class="b" style="left:975px;top:461px;width:60px;height:20px;overflow:hidden;"><div class="t" style="left:3.2px;top:3.93px;font-size:14.5px;line-height:14.5px;color:#1c1c1c;transform:scaleX(0.915);transform-origin:0 0;">VBA</div></div>
<div class="b" style="left:1036px;top:461px;width:140px;height:20px;overflow:hidden;"><div class="t" style="left:3.2px;top:3.93px;font-size:14.5px;line-height:14.5px;color:#1c1c1c;transform:scaleX(0.915);transform-origin:0 0;">INoDesLie</div></div>
<div class="b" style="left:1177px;top:461px;width:170px;height:20px;overflow:hidden;"><div class="t" style="left:3.2px;top:3.93px;font-size:14.5px;line-height:14.5px;color:#1c1c1c;transform:scaleX(0.915);transform-origin:0 0;">Dormant DC HI OV avec BTC RAL : 2010 / 2010</div></div>
<div class="b" style="left:934px;top:481px;width:41px;height:20px;background:#e3e3e3;border-right:1px solid #a8a8a8;border-bottom:1px solid #a8a8a8;"></div>
<div class="b" style="left:975px;top:481px;width:373px;height:20px;background:#ebebeb;"></div>
<div class="b" style="left:975px;top:481px;width:60px;height:20px;overflow:hidden;"><div class="t" style="left:3.2px;top:3.93px;font-size:14.5px;line-height:14.5px;color:#1c1c1c;transform:scaleX(0.915);transform-origin:0 0;">VBA</div></div>
<div class="b" style="left:1036px;top:481px;width:140px;height:20px;overflow:hidden;"><div class="t" style="left:3.2px;top:3.93px;font-size:14.5px;line-height:14.5px;color:#1c1c1c;transform:scaleX(0.915);transform-origin:0 0;">INoQteLien</div></div>
<div class="b" style="left:1177px;top:481px;width:170px;height:20px;overflow:hidden;"><div class="t" style="left:3.2px;top:3.93px;font-size:14.5px;line-height:14.5px;color:#1c1c1c;transform:scaleX(0.915);transform-origin:0 0;">1000</div></div>
<div class="b" style="left:934px;top:501px;width:41px;height:20px;background:#e3e3e3;border-right:1px solid #a8a8a8;border-bottom:1px solid #a8a8a8;"></div>
<div class="b" style="left:975px;top:501px;width:373px;height:20px;background:#ffffff;"></div>
<div class="b" style="left:975px;top:501px;width:60px;height:20px;overflow:hidden;"><div class="t" style="left:3.2px;top:3.93px;font-size:14.5px;line-height:14.5px;color:#1c1c1c;transform:scaleX(0.915);transform-origin:0 0;">VBA</div></div>
<div class="b" style="left:1036px;top:501px;width:140px;height:20px;overflow:hidden;"><div class="t" style="left:3.2px;top:3.93px;font-size:14.5px;line-height:14.5px;color:#1c1c1c;transform:scaleX(0.915);transform-origin:0 0;">INoRefCsa</div></div>
<div class="b" style="left:1177px;top:501px;width:170px;height:20px;overflow:hidden;"><div class="t" style="left:3.2px;top:3.93px;font-size:14.5px;line-height:14.5px;color:#1c1c1c;transform:scaleX(0.915);transform-origin:0 0;">1010412_2010_2010</div></div>
<div class="b" style="left:934px;top:521px;width:41px;height:20px;background:#e3e3e3;border-right:1px solid #a8a8a8;border-bottom:1px solid #a8a8a8;"></div>
<div class="b" style="left:975px;top:521px;width:373px;height:20px;background:#ebebeb;"></div>
<div class="b" style="left:975px;top:521px;width:60px;height:20px;overflow:hidden;"><div class="t" style="left:3.2px;top:3.93px;font-size:14.5px;line-height:14.5px;color:#1c1c1c;transform:scaleX(0.915);transform-origin:0 0;">VBA</div></div>
<div class="b" style="left:1036px;top:521px;width:140px;height:20px;overflow:hidden;"><div class="t" style="left:3.2px;top:3.93px;font-size:14.5px;line-height:14.5px;color:#1c1c1c;transform:scaleX(0.915);transform-origin:0 0;">INoRefCse</div></div>
<div class="b" style="left:1177px;top:521px;width:170px;height:20px;overflow:hidden;"><div class="t" style="left:3.2px;top:3.93px;font-size:14.5px;line-height:14.5px;color:#1c1c1c;transform:scaleX(0.915);transform-origin:0 0;">ISTTRAVDORH</div></div>
<div class="b" style="left:934px;top:541px;width:41px;height:20px;background:#e3e3e3;border-right:1px solid #a8a8a8;border-bottom:1px solid #a8a8a8;"></div>
<div class="b" style="left:975px;top:541px;width:373px;height:20px;background:#ffffff;"></div>
<div class="b" style="left:975px;top:541px;width:60px;height:20px;overflow:hidden;"><div class="t" style="left:3.2px;top:3.93px;font-size:14.5px;line-height:14.5px;color:#1c1c1c;transform:scaleX(0.915);transform-origin:0 0;">VBA</div></div>
<div class="b" style="left:1036px;top:541px;width:140px;height:20px;overflow:hidden;"><div class="t" style="left:3.2px;top:3.93px;font-size:14.5px;line-height:14.5px;color:#1c1c1c;transform:scaleX(0.915);transform-origin:0 0;">INoUnMes</div></div>
<div class="b" style="left:1177px;top:541px;width:170px;height:20px;overflow:hidden;"><div class="t" style="left:3.2px;top:3.93px;font-size:14.5px;line-height:14.5px;color:#1c1c1c;transform:scaleX(0.915);transform-origin:0 0;">mm</div></div>
<div class="b" style="left:934px;top:561px;width:41px;height:15px;background:#e3e3e3;border-right:1px solid #a8a8a8;border-bottom:1px solid #a8a8a8;"></div>
<div class="b" style="left:975px;top:561px;width:373px;height:15px;background:#ebebeb;"></div>
<div class="b" style="left:975px;top:561px;width:60px;height:15px;overflow:hidden;"><div class="t" style="left:3.2px;top:3.93px;font-size:14.5px;line-height:14.5px;color:#1c1c1c;transform:scaleX(0.915);transform-origin:0 0;">VBA</div></div>
<div class="b" style="left:1036px;top:561px;width:140px;height:15px;overflow:hidden;"><div class="t" style="left:3.2px;top:3.93px;font-size:14.5px;line-height:14.5px;color:#1c1c1c;transform:scaleX(0.915);transform-origin:0 0;">INoVariOri</div></div>
<div class="b" style="left:1177px;top:561px;width:170px;height:15px;overflow:hidden;"><div class="t" style="left:3.2px;top:3.93px;font-size:14.5px;line-height:14.5px;color:#1c1c1c;transform:scaleX(0.915);transform-origin:0 0;">ISTTRAVDORH_PRF</div></div>
<svg style="left:0;top:0" width="1592" height="730"><g stroke="#b8b8b8" stroke-width="1" stroke-dasharray="1 1"><line x1="1036.5" y1="341" x2="1036.5" y2="576"/><line x1="1177.5" y1="341" x2="1177.5" y2="576"/><line x1="1348.5" y1="341" x2="1348.5" y2="576"/><line x1="975" y1="360.5" x2="1348" y2="360.5"/><line x1="975" y1="380.5" x2="1348" y2="380.5"/><line x1="975" y1="400.5" x2="1348" y2="400.5"/><line x1="975" y1="420.5" x2="1348" y2="420.5"/><line x1="975" y1="440.5" x2="1348" y2="440.5"/><line x1="975" y1="460.5" x2="1348" y2="460.5"/><line x1="975" y1="480.5" x2="1348" y2="480.5"/><line x1="975" y1="500.5" x2="1348" y2="500.5"/><line x1="975" y1="520.5" x2="1348" y2="520.5"/><line x1="975" y1="540.5" x2="1348" y2="540.5"/><line x1="975" y1="560.5" x2="1348" y2="560.5"/></g><line x1="1348.5" y1="319" x2="1348.5" y2="576" stroke="#a8a8a8" stroke-width="1"/></svg>
<div class="b" style="left:975px;top:341px;width:62px;height:21px;border:2px solid #000;border-left-width:2px;border-top-width:2px;"></div>
<div class="b" style="left:932px;top:317px;width:2px;height:261px;background:#646464;"></div>
<div class="b" style="left:932px;top:317px;width:668px;height:2px;background:#646464;"></div>
<div class="b" style="left:932px;top:576px;width:700px;height:2px;background:#646464;"></div>
<div class="b" style="left:932px;top:608px;width:668px;height:121px;background:#fff;"></div>
<div class="b" style="left:934px;top:610px;width:42px;height:22px;background:#a8a8a8;border-top:1px solid #e4e4e4;border-left:1px solid #e4e4e4;border-right:1px solid #f0a040;border-bottom:1px solid #f0a040;"></div>
<svg style="left:959.5px;top:616.5px" width="11" height="11" viewBox="0 0 11 11"><path d="M10.5 0 L10.5 10.5 L0 10.5 Z" fill="#e4e4e4"/></svg>
<div class="b" style="left:976px;top:610px;width:121px;height:22px;background:linear-gradient(#fcdcc0,#f8b888 55%,#f09a5c);border-right:1px solid #a8a8a8;border-bottom:1px solid #f0a040;"></div>
<div class="t" style="left:1011.295px;top:613.93px;font-size:14.5px;line-height:14.5px;color:#1c1c1c;transform:scaleX(0.9150);transform-origin:0 0;">Type ITs</div>
<div class="b" style="left:1097px;top:610px;width:151px;height:22px;background:linear-gradient(#f6f6f6,#dcdcdc);border-right:1px solid #a8a8a8;border-bottom:1px solid #a8a8a8;"></div>
<div class="t" style="left:1130.45328125px;top:613.93px;font-size:14.5px;line-height:14.5px;color:#1c1c1c;transform:scaleX(0.9150);transform-origin:0 0;">Sous Type ITs</div>
<div class="b" style="left:1248px;top:610px;width:121px;height:22px;background:linear-gradient(#f6f6f6,#dcdcdc);border-right:1px solid #a8a8a8;border-bottom:1px solid #a8a8a8;"></div>
<div class="t" style="left:1281.822421875px;top:613.93px;font-size:14.5px;line-height:14.5px;color:#1c1c1c;transform:scaleX(0.9150);transform-origin:0 0;">Code ITs</div>
<div class="b" style="left:1369px;top:610px;width:122px;height:22px;background:linear-gradient(#f6f6f6,#dcdcdc);border-right:1px solid #a8a8a8;border-bottom:1px solid #a8a8a8;"></div>
<div class="t" style="left:1400.4987890625px;top:613.93px;font-size:14.5px;line-height:14.5px;color:#1c1c1c;transform:scaleX(0.9150);transform-origin:0 0;">Valeur ITs</div>
<div class="b" style="left:934px;top:632px;width:41px;height:20px;background:#ffcc8a;border-right:1px solid #f0a040;border-bottom:1px solid #a8a8a8;"></div>
<div class="b" style="left:975px;top:632px;width:515px;height:20px;background:#ffffff;"></div>
<div class="b" style="left:975px;top:632px;width:120px;height:20px;overflow:hidden;"><div class="t" style="left:3.2px;top:3.93px;font-size:14.5px;line-height:14.5px;color:#1c1c1c;transform:scaleX(0.915);transform-origin:0 0;">INFO</div></div>
<div class="b" style="left:1096px;top:632px;width:150px;height:20px;overflow:hidden;"><div class="t" style="left:3.2px;top:3.93px;font-size:14.5px;line-height:14.5px;color:#1c1c1c;transform:scaleX(0.915);transform-origin:0 0;">PROFIL</div></div>
<div class="b" style="left:1247px;top:632px;width:120px;height:20px;overflow:hidden;"><div class="t" style="left:3.2px;top:3.93px;font-size:14.5px;line-height:14.5px;color:#1c1c1c;transform:scaleX(0.915);transform-origin:0 0;">CADRE</div></div>
<div class="b" style="left:1368px;top:632px;width:121px;height:20px;overflow:hidden;"><div class="t" style="left:3.2px;top:3.93px;font-size:14.5px;line-height:14.5px;color:#1c1c1c;transform:scaleX(0.915);transform-origin:0 0;">DORMANT</div></div>
<div class="b" style="left:934px;top:652px;width:41px;height:20px;background:#e3e3e3;border-right:1px solid #a8a8a8;border-bottom:1px solid #a8a8a8;"></div>
<div class="b" style="left:975px;top:652px;width:515px;height:20px;background:#ebebeb;"></div>
<div class="b" style="left:975px;top:652px;width:120px;height:20px;overflow:hidden;"><div class="t" style="left:3.2px;top:3.93px;font-size:14.5px;line-height:14.5px;color:#1c1c1c;transform:scaleX(0.915);transform-origin:0 0;">INFO</div></div>
<div class="b" style="left:1096px;top:652px;width:150px;height:20px;overflow:hidden;"><div class="t" style="left:3.2px;top:3.93px;font-size:14.5px;line-height:14.5px;color:#1c1c1c;transform:scaleX(0.915);transform-origin:0 0;">PROFIL</div></div>
<div class="b" style="left:1247px;top:652px;width:120px;height:20px;overflow:hidden;"><div class="t" style="left:3.2px;top:3.93px;font-size:14.5px;line-height:14.5px;color:#1c1c1c;transform:scaleX(0.915);transform-origin:0 0;">COUPE</div></div>
<div class="b" style="left:1368px;top:652px;width:121px;height:20px;overflow:hidden;"><div class="t" style="left:3.2px;top:3.93px;font-size:14.5px;line-height:14.5px;color:#1c1c1c;transform:scaleX(0.915);transform-origin:0 0;">90@90</div></div>
<div class="b" style="left:934px;top:672px;width:41px;height:20px;background:#e3e3e3;border-right:1px solid #a8a8a8;border-bottom:1px solid #a8a8a8;"></div>
<div class="b" style="left:975px;top:672px;width:515px;height:20px;background:#ffffff;"></div>
<div class="b" style="left:975px;top:672px;width:120px;height:20px;overflow:hidden;"><div class="t" style="left:3.2px;top:3.93px;font-size:14.5px;line-height:14.5px;color:#1c1c1c;transform:scaleX(0.915);transform-origin:0 0;">INFO</div></div>
<div class="b" style="left:1096px;top:672px;width:150px;height:20px;overflow:hidden;"><div class="t" style="left:3.2px;top:3.93px;font-size:14.5px;line-height:14.5px;color:#1c1c1c;transform:scaleX(0.915);transform-origin:0 0;">PROFIL</div></div>
<div class="b" style="left:1247px;top:672px;width:120px;height:20px;overflow:hidden;"><div class="t" style="left:3.2px;top:3.93px;font-size:14.5px;line-height:14.5px;color:#1c1c1c;transform:scaleX(0.915);transform-origin:0 0;">POSITION</div></div>
<div class="b" style="left:1368px;top:672px;width:121px;height:20px;overflow:hidden;"><div class="t" style="left:3.2px;top:3.93px;font-size:14.5px;line-height:14.5px;color:#1c1c1c;transform:scaleX(0.915);transform-origin:0 0;">H</div></div>
<div class="b" style="left:934px;top:692px;width:41px;height:20px;background:#e3e3e3;border-right:1px solid #a8a8a8;border-bottom:1px solid #a8a8a8;"></div>
<div class="b" style="left:975px;top:692px;width:515px;height:20px;background:#ebebeb;"></div>
<div class="b" style="left:975px;top:692px;width:120px;height:20px;overflow:hidden;"><div class="t" style="left:3.2px;top:3.93px;font-size:14.5px;line-height:14.5px;color:#1c1c1c;transform:scaleX(0.915);transform-origin:0 0;">PVC</div></div>
<div class="b" style="left:1096px;top:692px;width:150px;height:20px;overflow:hidden;"><div class="t" style="left:3.2px;top:3.93px;font-size:14.5px;line-height:14.5px;color:#1c1c1c;transform:scaleX(0.915);transform-origin:0 0;">DEBIT</div></div>
<div class="b" style="left:1247px;top:692px;width:120px;height:20px;overflow:hidden;"><div class="t" style="left:3.2px;top:3.93px;font-size:14.5px;line-height:14.5px;color:#1c1c1c;transform:scaleX(0.915);transform-origin:0 0;">CT</div></div>
<div class="b" style="left:1368px;top:692px;width:121px;height:20px;overflow:hidden;"><div class="t" style="left:3.2px;top:3.93px;font-size:14.5px;line-height:14.5px;color:#1c1c1c;transform:scaleX(0.915);transform-origin:0 0;">1</div></div>
<svg style="left:0;top:0" width="1592" height="730"><g stroke="#b8b8b8" stroke-width="1" stroke-dasharray="1 1"><line x1="1096.5" y1="632" x2="1096.5" y2="712"/><line x1="1247.5" y1="632" x2="1247.5" y2="712"/><line x1="1368.5" y1="632" x2="1368.5" y2="712"/><line x1="1490.5" y1="632" x2="1490.5" y2="712"/><line x1="975" y1="651.5" x2="1490" y2="651.5"/><line x1="975" y1="671.5" x2="1490" y2="671.5"/><line x1="975" y1="691.5" x2="1490" y2="691.5"/><line x1="975" y1="711.5" x2="1490" y2="711.5"/></g><line x1="1490.5" y1="610" x2="1490.5" y2="712" stroke="#a8a8a8" stroke-width="1"/><line x1="934" y1="711.5" x2="1491" y2="711.5" stroke="#a8a8a8" stroke-width="1"/></svg>
<div class="b" style="left:975px;top:632px;width:122px;height:21px;border:2px solid #000;border-left-width:2px;border-top-width:2px;"></div>
<div class="b" style="left:932px;top:608px;width:2px;height:123px;background:#646464;"></div>
<div class="b" style="left:932px;top:608px;width:668px;height:2px;background:#646464;"></div>
<div class="b" style="left:924px;top:292px;width:464px;height:285px;background:#ff9797;mix-blend-mode:darken;"></div>
<div class="b" style="left:924px;top:603px;width:581px;height:118px;background:#ff9797;mix-blend-mode:darken;"></div>
<div class="t" style="left:1413.7px;top:401.82px;font-size:20px;line-height:20px;color:#ff2020;transform:scaleX(0.9842);transform-origin:0 0;">VBA</div>
<div class="t" style="left:780.6px;top:659.07px;font-size:20px;line-height:20px;color:#ff2020;">Infos</div>
<div class="t" style="left:782.3px;top:680.77px;font-size:20px;line-height:20px;color:#ff2020;transform:scaleX(0.9952);transform-origin:0 0;">Techniques</div>
</body></html>
